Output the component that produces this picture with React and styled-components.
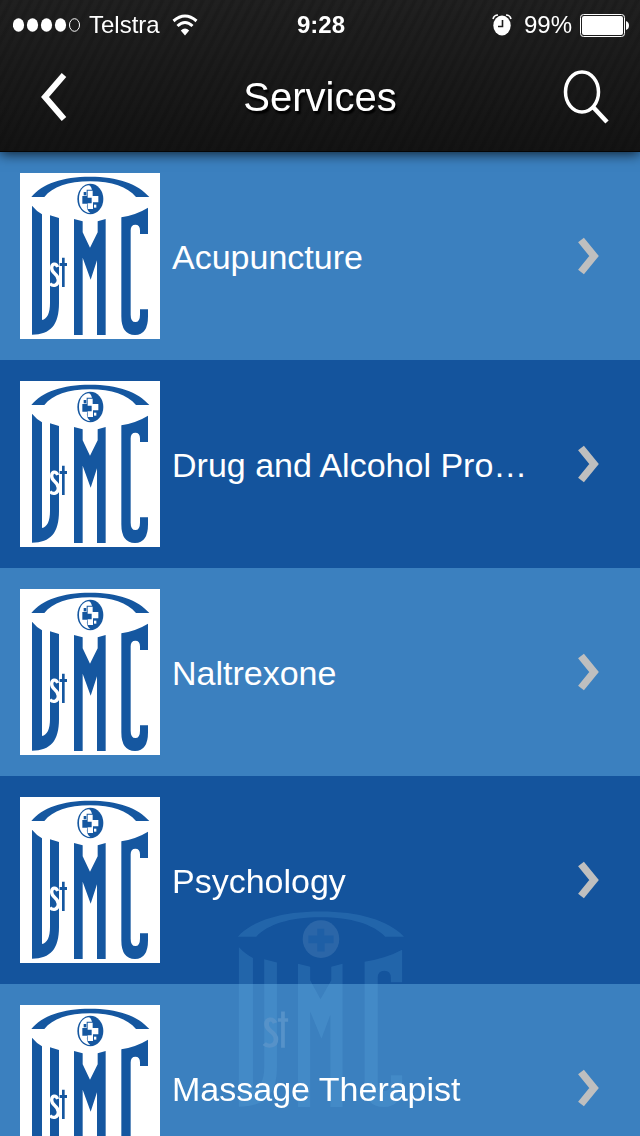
import React from 'react'
import styled, { createGlobalStyle } from 'styled-components'

const GlobalStyle = createGlobalStyle`
  * {
    box-sizing: border-box;
  }
  body {
    margin: 0;
    background: #14549d;
    color: #fff;
    font-family: "Liberation Sans", Arial, sans-serif;
  }
`

const Screen = styled.div`
  position: relative;
  height: 100vh;
  display: flex;
  flex-direction: column;
  overflow: hidden;
`

const Header = styled.header`
  position: relative;
  z-index: 3;
  flex: none;
  border-bottom: 1px solid #050505;
  background:
    repeating-linear-gradient(117deg, rgba(0, 0, 0, 0.12) 0 2px, transparent 4px 7px, rgba(0, 0, 0, 0.12) 9px),
    linear-gradient(#202020, #1a1a1a 50%, #131313);
  box-shadow: 0 2px 12px rgba(0, 0, 0, 0.75);
`

const StatusBar = styled.div`
  height: 50px;
  padding: 0 11px 0 13px;
  display: grid;
  grid-template-columns: 1fr auto 1fr;
  align-items: center;
  font-size: 24px;
  line-height: 32px;
`

const StatusGroup = styled.div`
  display: flex;
  align-items: center;
  justify-content: ${props => (props.$end ? 'flex-end' : 'flex-start')};
  gap: ${props => (props.$end ? 8 : 12)}px;
`

const Carrier = styled.div`
  display: flex;
  align-items: center;
  gap: 8px;
`

const Clock = styled.time`
  font-weight: bold;
`

const AlarmWrap = styled.span`
  display: flex;
  margin-right: 4px;
`

const NavBar = styled.div`
  height: 101px;
  padding: 0 24px 8px;
  display: grid;
  grid-template-columns: 60px 1fr 60px;
  align-items: center;
`

const Title = styled.h1`
  margin: 0;
  text-align: center;
  font-size: 40px;
  font-weight: normal;
  line-height: 56px;
  text-shadow: 2px 3px 2px #000;
`

const IconButton = styled.button`
  height: 60px;
  padding: 0;
  border: 0;
  background: transparent;
  color: #fff;
  cursor: pointer;
  display: flex;
  align-items: center;
  justify-content: center;
`

const List = styled.ul`
  flex: 1;
  min-height: 0;
  margin: 0;
  padding: 0;
  list-style: none;
  overflow-y: auto;
  scrollbar-width: none;
`

const Item = styled.li`
  background: #3b80bf;
  &:nth-child(even) {
    background: #14549d;
  }
`

const ItemLink = styled.a`
  position: relative;
  z-index: 2;
  height: 208px;
  padding: 0 40px 0 20px;
  display: flex;
  align-items: center;
  gap: 12px;
  color: #fff;
  text-decoration: none;
`

const Thumb = styled.span`
  flex: none;
  display: flex;
  background: #fff;
`

const Label = styled.span`
  flex: 1;
  min-width: 0;
  padding-top: 2px;
  font-size: 34px;
  line-height: 48px;
`

const Chevron = styled.svg`
  flex: none;
`

const Watermark = styled.div`
  position: absolute;
  z-index: 1;
  right: 0;
  bottom: 24px;
  left: 0;
  display: flex;
  justify-content: center;
  opacity: 0.16;
  pointer-events: none;
`

const services = [
  'Acupuncture',
  'Drug and Alcohol Pro…',
  'Naltrexone',
  'Psychology',
  'Massage Therapist',
]

const ClinicLogo = ({ width, height, faded }) => {
  const ink = faded ? '#70bdf2' : '#1557a0'
  const cross = faded ? '#e4f0fa' : '#1557a0'
  const paper = faded ? '#e4f0fa' : '#fff'
  return (
    <svg width={width} height={height} viewBox="0 0 420 498" preserveAspectRatio="none" aria-hidden="true">
      <g fill={ink}>
        <path d="M34 72C66 32 128 11 210 11S354 32 388 72H348C322 42 276 25 210 25S98 42 73 72Z" />
        <path d="M36 98Q50 115 66 124V441C82 438 90 420 90 390V127L117 135V390C117 455 92 485 36 485Z" />
        <path d="M162 138L188 145V178L210 224L233 178V145L257 138V486H231V262L212 320L188 254V486H162Z" />
        <path d="M304 133Q350 125 384 104V183H360V172Q360 155 346 155Q332 155 332 172V425Q332 447 346 447Q360 447 360 425V409H384V430Q384 486 345 486Q304 486 304 430Z" />
      </g>
      <path d="M126 254H134V270H141V279H134V342H126V279H119V270H126Z" fill={cross} />
      <path d="M113 282C108 269 95 271 95 285C95 303 115 302 115 321C115 338 99 341 90 332" fill="none" stroke={paper} strokeWidth="10" />
      <ellipse cx="211" cy="78" rx="39" ry="46" fill={faded ? '#a5c5e5' : ink} />
      {faded ? (
        <path d="M203 53H218V69H238V88H219V108H203V88H184V69H203Z" fill="#5a9bd8" />
      ) : (
        <g>
          <path d="M207 37C190 37 177 54 177 78C177 103 191 119 211 120C201 112 199 102 202 92H187V69H200V50H216C213 42 211 38 207 37Z" fill="#fff" />
          <path d="M203 53H218V69H235V88H219V108H203V91H215V74H203Z" fill="#fff" />
          <path d="M191 57H199V67H191Z" fill={ink} />
          <path d="M222 95H229V104H222Z" fill="#fff" />
        </g>
      )}
    </svg>
  )
}

const SignalIcon = () => (
  <svg width="68" height="14" viewBox="0 0 68 14" role="img" aria-label="Signal strength">
    {[5.5, 19.5, 33.5, 47.5].map(cx => (
      <ellipse key={cx} cx={cx} cy="7" rx="5.6" ry="6.8" fill="#fff" />
    ))}
    <ellipse cx="61.5" cy="7" rx="5" ry="6.3" fill="none" stroke="#fff" />
  </svg>
)

const WifiIcon = () => (
  <svg width="26" height="22" viewBox="0 0 26 22" fill="none" stroke="#fff" strokeWidth="3" role="img" aria-label="Wi-Fi">
    <path d="M1.5 7Q13-3 24.5 7" />
    <path d="M5.5 12Q13 5 20.5 12" />
    <path d="M13 21.5L8.8 16.5Q13 12.5 17.2 16.5Z" fill="#fff" stroke="none" />
  </svg>
)

const AlarmIcon = () => (
  <svg width="20" height="22" viewBox="0 0 20 22" role="img" aria-label="Alarm set">
    <path d="M1 5Q2 1 6 1M14 1Q18 1 19 5" fill="none" stroke="#fff" strokeWidth="1.6" />
    <ellipse cx="10" cy="11.5" rx="8.7" ry="10" fill="#fff" />
    <path d="M10.5 6V12.5H6" fill="none" stroke="#1c1c1c" strokeWidth="1.6" />
  </svg>
)

const BatteryIcon = () => (
  <svg width="49" height="23" viewBox="0 0 49 23" role="img" aria-label="Battery">
    <rect x="0.5" y="0.5" width="44" height="22" rx="3" fill="none" stroke="#fff" />
    <rect x="2" y="2" width="41" height="19" rx="2" fill="#fff" />
    <path d="M46 7Q49 8 49 11.5T46 16Z" fill="#fff" />
  </svg>
)

const App = () => {
  return (
    <Screen>
      <GlobalStyle />
      <Header>
        <StatusBar>
          <StatusGroup>
            <Carrier>
              <SignalIcon />
              <span>Telstra</span>
            </Carrier>
            <WifiIcon />
          </StatusGroup>
          <Clock>9:28</Clock>
          <StatusGroup $end>
            <AlarmWrap>
              <AlarmIcon />
            </AlarmWrap>
            <span>99%</span>
            <BatteryIcon />
          </StatusGroup>
        </StatusBar>
        <NavBar>
          <IconButton type="button" aria-label="Back">
            <svg width="26" height="50" viewBox="0 0 26 50" fill="none" stroke="currentColor" strokeWidth="6">
              <path d="M23 3L4 25L23 47" />
            </svg>
          </IconButton>
          <Title>Services</Title>
          <IconButton type="button" aria-label="Search">
            <svg width="46" height="54" viewBox="0 0 46 54" fill="none" stroke="currentColor">
              <ellipse cx="19" cy="22" rx="16.5" ry="20" strokeWidth="3.5" />
              <path d="M30 37L44 52" strokeWidth="4.5" />
            </svg>
          </IconButton>
        </NavBar>
      </Header>
      <List>
        {services.map(name => (
          <Item key={name}>
            <ItemLink href="#">
              <Thumb>
                <ClinicLogo width={140} height={166} />
              </Thumb>
              <Label>{name}</Label>
              <Chevron width="22" height="38" viewBox="0 0 22 38" fill="none" stroke="#bfbfbf" strokeWidth="7.5" aria-hidden="true">
                <path d="M3 3L16 19L3 35" />
              </Chevron>
            </ItemLink>
          </Item>
        ))}
      </List>
      <Watermark>
        <ClinicLogo width={197} height={205} faded />
      </Watermark>
    </Screen>
  )
}

export default App
